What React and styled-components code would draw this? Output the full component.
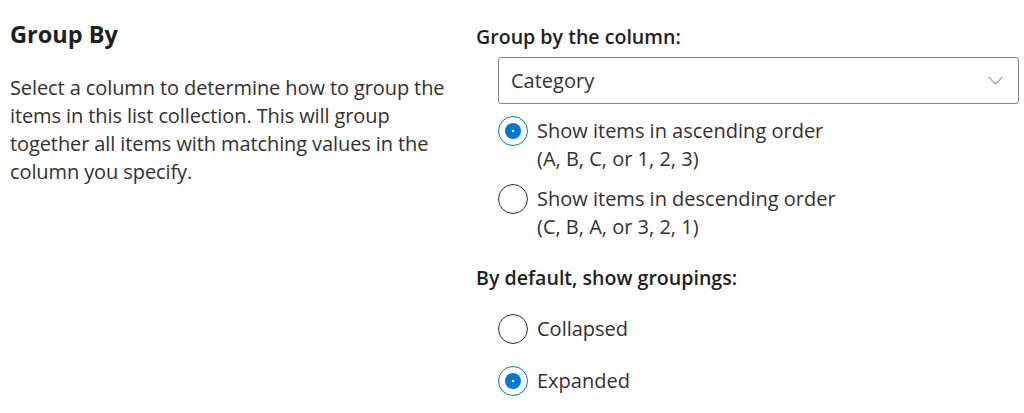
import React, { useState } from 'react';
import styled, { createGlobalStyle } from 'styled-components';

const GlobalStyle = createGlobalStyle`
    html, body {
        margin: 0;
        padding: 0;
        background: #fff;
    }
    body {
        font-family: "Open Sans", "Noto Sans", "Liberation Sans", sans-serif;
        color: #323130;
    }
`;

const Page = styled.div`
    display: grid;
    grid-template-columns: 466px 1fr;
    padding: 20px 5px 0 10px;
    height: 413px;
    box-sizing: border-box;
`;

const Intro = styled.div`
    display: flex;
    flex-direction: column;
`;

const Title = styled.h2`
    margin: 0;
    font-size: 23.5px;
    font-weight: 700;
    line-height: 28px;
    color: #201f1e;
`;

const Description = styled.p`
    margin: 26px 0 0;
    font-size: 20px;
    line-height: 28px;
    width: 450px;
    letter-spacing: -0.1px;
`;

const Settings = styled.div`
    display: flex;
    flex-direction: column;
`;

const FieldLabel = styled.div`
    font-size: 19.6px;
    font-weight: 600;
    line-height: 28px;
    color: #201f1e;
    margin-top: ${props => props.$top || 0}px;
`;

const Indented = styled.div`
    padding-left: 22px;
    display: flex;
    flex-direction: column;
`;

const Select = styled.button`
    display: flex;
    align-items: center;
    justify-content: space-between;
    height: 47px;
    margin-top: 6px;
    padding: 0 14px 0 12px;
    border: 1px solid #8a8886;
    border-radius: 3px;
    background: #fff;
    font: inherit;
    font-size: 20px;
    color: #323130;
    cursor: pointer;
    text-align: left;
`;

const RadioList = styled.div`
    display: flex;
    flex-direction: column;
    gap: ${props => props.$gap}px;
    margin-top: ${props => props.$top}px;
`;

const Option = styled.label`
    display: flex;
    align-items: flex-start;
    gap: 9px;
    cursor: pointer;
`;

const Circle = styled.span`
    flex: 0 0 auto;
    width: 30px;
    height: 30px;
    box-sizing: border-box;
    border-radius: 50%;
    border: 1px solid ${props => (props.$checked ? '#0078d4' : '#323130')};
    display: flex;
    align-items: center;
    justify-content: center;
    margin-top: -1px;

    &::after {
        content: '';
        display: ${props => (props.$checked ? 'block' : 'none')};
        width: 16px;
        height: 16px;
        border-radius: 50%;
        background: radial-gradient(circle, #fff 0 1.2px, #0078d4 1.6px);
    }
`;

const OptionText = styled.span`
    font-size: 20px;
    line-height: 28px;
    color: #323130;
`;

const Chevron = () => (
    <svg width="17" height="11" viewBox="0 0 17 11" fill="none">
        <path d="M1.5 2 L8.5 9 L15.5 2" stroke="#605e5c" strokeWidth="1" />
    </svg>
);

const Radio = ({ checked, lines, onSelect }) => (
    <Option onClick={onSelect}>
        <Circle $checked={checked} />
        <OptionText>
            {lines.map((line, i) => (
                <div key={i}>{line}</div>
            ))}
        </OptionText>
    </Option>
);

export default function App() {
    const [order, setOrder] = useState('asc');
    const [grouping, setGrouping] = useState('expanded');

    return (
        <>
            <GlobalStyle />
            <Page>
                <Intro>
                    <Title>Group By</Title>
                    <Description>
                        Select a column to determine how to group the items in this list
                        collection. This will group together all items with matching values
                        in the column you specify.
                    </Description>
                </Intro>
                <Settings>
                    <FieldLabel $top={3}>Group by the column:</FieldLabel>
                    <Indented>
                        <Select>
                            <span>Category</span>
                            <Chevron />
                        </Select>
                        <RadioList $gap={12} $top={13}>
                            <Radio
                                checked={order === 'asc'}
                                onSelect={() => setOrder('asc')}
                                lines={['Show items in ascending order', '(A, B, C, or 1, 2, 3)']}
                            />
                            <Radio
                                checked={order === 'desc'}
                                onSelect={() => setOrder('desc')}
                                lines={['Show items in descending order', '(C, B, A, or 3, 2, 1)']}
                            />
                        </RadioList>
                    </Indented>
                    <FieldLabel $top={23}>By default, show groupings:</FieldLabel>
                    <Indented>
                        <RadioList $gap={23} $top={23}>
                            <Radio
                                checked={grouping === 'collapsed'}
                                onSelect={() => setGrouping('collapsed')}
                                lines={['Collapsed']}
                            />
                            <Radio
                                checked={grouping === 'expanded'}
                                onSelect={() => setGrouping('expanded')}
                                lines={['Expanded']}
                            />
                        </RadioList>
                    </Indented>
                </Settings>
            </Page>
        </>
    );
}
